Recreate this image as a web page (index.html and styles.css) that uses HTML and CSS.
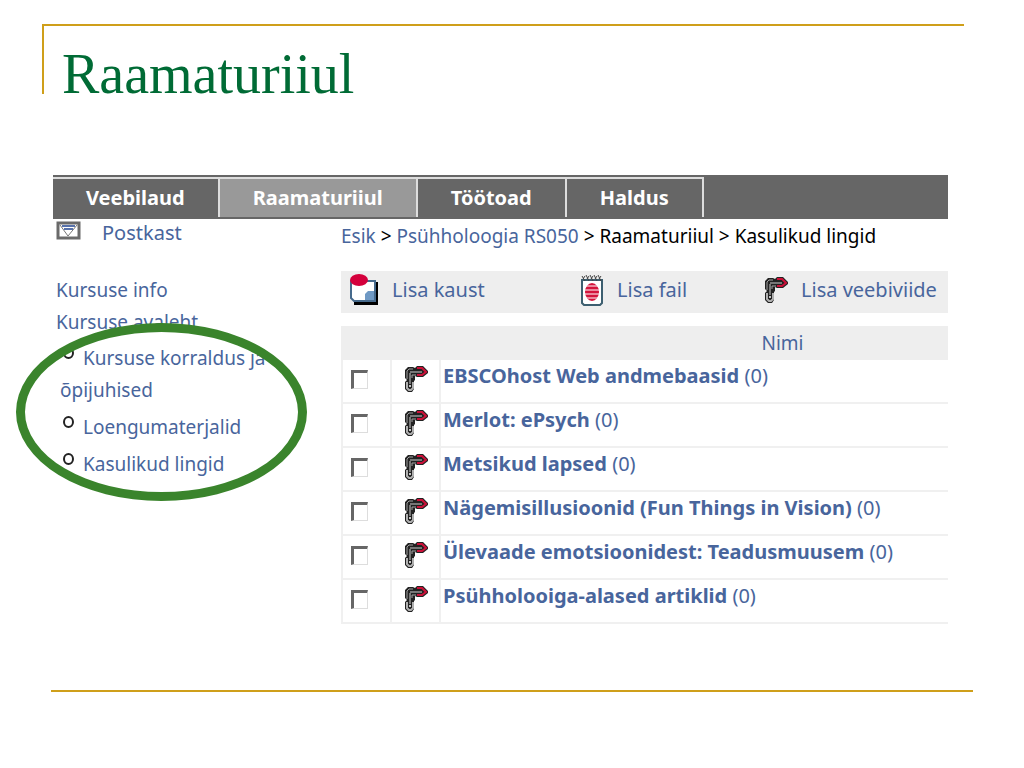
FILE: index.html
```html
<!DOCTYPE html>
<html lang="et">
  <head>
    <meta charset="utf-8">
    <title>Raamaturiiul</title>
    <link rel="stylesheet" href="styles.css">
  </head>

  <body>
    <!-- link icon, used in the toolbar and in every row -->
    <svg class="sprite" aria-hidden="true">
      <symbol id="chain" viewBox="0 0 24 27">
        <path d="M4 1H9L11 2L13 0H19L24 5V7L19 11H13L11 10V14L10 15V23L8 26H4L1 23V16L3 14L1 12V4Z" fill="#222"/>
        <path d="M13 2H18L22 6L18 9H13" fill="none" stroke="#cc1038" stroke-width="2"/>
        <path d="M3 13V5L5 3H9M8 12V9H12" fill="none" stroke="#a0a0a0" stroke-width="1"/>
        <path d="M3 16V22L5 24H7L9 22V16" fill="none" stroke="#b0b0b0" stroke-width="2"/>
        <path d="M6 18V7M6 6H18" fill="none" stroke="#ccc" stroke-width="1"/>
        <circle cx="6" cy="20" r="1" fill="#fff"/>
      </symbol>
    </svg>

    <header class="title">
      <h1>Raamaturiiul</h1>
    </header>

    <div class="portal">
      <nav class="tabs">
        <a href="#">Veebilaud</a>
        <a href="#" class="active">Raamaturiiul</a>
        <a href="#">Töötoad</a>
        <a href="#">Haldus</a>
      </nav>

      <div class="columns">
        <aside class="side">
          <a href="#" class="mailbox">
            <svg width="25" height="19" viewBox="0 0 25 19">
              <rect x="2" y="2" width="21" height="15" fill="#fff" stroke="#6a6a6a" stroke-width="3"/>
              <path d="M4 4L12 15L21 4" fill="none" stroke="#777" stroke-width="1"/>
              <path d="M6 5H19M8 8H17" stroke="#5872ab" stroke-width="2"/>
            </svg>
            Postkast
          </a>
          <a href="#">Kursuse info</a>
          <a href="#">Kursuse avaleht</a>
          <div class="marked">
            <ul>
              <li><a href="#">Kursuse korraldus ja õpijuhised</a></li>
              <li><a href="#">Loengumaterjalid</a></li>
              <li><a href="#">Kasulikud lingid</a></li>
            </ul>
            <div class="ring"></div>
          </div>
        </aside>

        <main class="content">
          <p class="path">
            <a href="#">Esik</a> &gt; <a href="#">Psühholoogia RS050</a> &gt; Raamaturiiul &gt; Kasulikud lingid
          </p>

          <div class="toolbar">
            <a href="#">
              <svg width="29" height="32" viewBox="0 0 29 32">
                <path d="M4 8H28V31H4Z" fill="#000"/>
                <path d="M1 7H25V27H4L1 24Z" fill="#fff" stroke="#466a8c" stroke-width="2"/>
                <path d="M15 26V20L18 17H24V26Z" fill="#6f99c4"/>
                <ellipse cx="9" cy="6" rx="9" ry="6" fill="#d4003c"/>
              </svg>
              Lisa kaust
            </a>
            <a href="#">
              <svg width="24" height="32" viewBox="0 0 24 32">
                <path d="M2 6H22V29L20 31H4L2 29Z" fill="#fff" stroke="#3d5f70" stroke-width="2"/>
                <path d="M2 2L5 7M6 1L9 7M10 1L13 7M14 1L17 7M18 1L21 7M5 2L3 5M9 2L7 5M13 2L11 5M17 2L15 5M21 2L19 5" fill="none" stroke="#444" stroke-width="1"/>
                <ellipse cx="12" cy="18" rx="7" ry="9" fill="#d4143c"/>
                <path d="M4 12H20M4 16H20M4 20H20M4 24H20" stroke="#fff" stroke-width="1"/>
              </svg>
              Lisa fail
            </a>
            <a href="#">
              <svg width="24" height="27"><use href="#chain"/></svg>
              Lisa veebiviide
            </a>
          </div>

          <table class="links">
            <thead>
              <tr>
                <th class="check"></th>
                <th class="icon"></th>
                <th class="name">Nimi</th>
              </tr>
            </thead>
            <tbody>
              <tr>
                <td><input type="checkbox" aria-label="EBSCOhost Web andmebaasid"></td>
                <td><svg width="24" height="27"><use href="#chain"/></svg></td>
                <td><a href="#"><b>EBSCOhost Web andmebaasid</b> (0)</a></td>
              </tr>
              <tr>
                <td><input type="checkbox" aria-label="Merlot: ePsych"></td>
                <td><svg width="24" height="27"><use href="#chain"/></svg></td>
                <td><a href="#"><b>Merlot: ePsych</b> (0)</a></td>
              </tr>
              <tr>
                <td><input type="checkbox" aria-label="Metsikud lapsed"></td>
                <td><svg width="24" height="27"><use href="#chain"/></svg></td>
                <td><a href="#"><b>Metsikud lapsed</b> (0)</a></td>
              </tr>
              <tr>
                <td><input type="checkbox" aria-label="Nägemisillusioonid (Fun Things in Vision)"></td>
                <td><svg width="24" height="27"><use href="#chain"/></svg></td>
                <td><a href="#"><b>Nägemisillusioonid (Fun Things in Vision)</b> (0)</a></td>
              </tr>
              <tr>
                <td><input type="checkbox" aria-label="Ülevaade emotsioonidest: Teadusmuusem"></td>
                <td><svg width="24" height="27"><use href="#chain"/></svg></td>
                <td><a href="#"><b>Ülevaade emotsioonidest: Teadusmuusem</b> (0)</a></td>
              </tr>
              <tr>
                <td><input type="checkbox" aria-label="Psühholooiga-alased artiklid"></td>
                <td><svg width="24" height="27"><use href="#chain"/></svg></td>
                <td><a href="#"><b>Psühholooiga-alased artiklid</b> (0)</a></td>
              </tr>
            </tbody>
          </table>
        </main>
      </div>
    </div>

    <hr class="rule">
  </body>
</html>
```
FILE: styles.css
```css
*{
  box-sizing:border-box;
  margin:0;
  padding:0;
}

body{
  background-color:white;
  color:black;
  font-family:"Noto Sans", sans-serif;
  font-size:20px;
  line-height:32px;
  padding-top:24px;
}

a{
  color:#48659c;
  text-decoration:none;
}

svg{
  display:block;
  flex:none;
}

.sprite{
  position:absolute;
  width:0;
  height:0;
}

/* ---------- slide title ---------- */

.title{
  height:70px;
  margin:0 60px 0 42px;
  padding:16px 0 0 18px;
  border-top:2px solid #cf9f1a;
  border-left:2px solid #cf9f1a;
}

.title h1{
  color:#006b35;
  font-family:"Liberation Serif", serif;
  font-size:56px;
  font-weight:normal;
  line-height:64px;
}

/* ---------- portal ---------- */

.portal{
  margin:81px 76px 0 53px;
}

.tabs{
  display:flex;
  height:44px;
  padding:2px 0;
  background-color:#666;
}

.tabs a{
  padding:0 33px;
  border-top:2px solid #ddd;
  border-right:2px solid #ddd;
  color:white;
  font-weight:bold;
  line-height:38px;
}

.tabs .active{
  background-color:#999;
}

.columns{
  display:grid;
  grid-template-columns:288px 1fr;
}

.side{
  padding-left:3px;
  font-size:19px;
}

.side > a{
  display:block;
}

.side .mailbox{
  display:flex;
  gap:21px;
  height:55px;
  font-size:20px;
  line-height:28px;
}

.mailbox svg{
  margin-top:2px;
}

.marked{
  position:relative;
  padding:4px 40px 0 4px;
}

.marked ul{
  list-style:none;
}

.marked li{
  margin-bottom:5px;
}

.marked li::before{
  content:"";
  display:inline-block;
  width:7px;
  height:8px;
  margin:0 9px 14px 3px;
  border:2px solid #222;
  border-radius:50%;
  vertical-align:middle;
}

/* drawn over the list */
.ring{
  position:absolute;
  top:-15px;
  left:-40px;
  width:291px;
  height:178px;
  border:9px solid #3a842c;
  border-radius:50%;
  pointer-events:none;
}

.path{
  font-size:19px;
  line-height:34px;
  white-space:nowrap;
}

.toolbar{
  display:grid;
  grid-template-columns:230fr 184fr 184fr;
  height:42px;
  margin:18px 0 13px;
  padding-left:9px;
  background-color:#eee;
}

.toolbar a{
  display:flex;
  align-items:center;
  gap:13px;
  height:38px;
  white-space:nowrap;
}

.links{
  width:100%;
  border-collapse:separate;
  border-spacing:0;
  table-layout:fixed;
}

.links th{
  height:34px;
  background-color:#eee;
  color:#48659c;
  font-size:19px;
  font-weight:normal;
}

.links .check{
  width:49px;
}

.links .icon{
  width:49px;
}

.links .name{
  padding-left:178px;
}

.links td{
  height:44px;
  padding:0 0 4px 2px;
  border:solid #f0f0f0;
  border-width:0 0 2px 2px;
  vertical-align:top;
  white-space:nowrap;
}

.links td svg{
  margin:6px 0 0 10px;
}

.links input{
  display:block;
  appearance:none;
  width:17px;
  height:19px;
  margin:10px 0 0 6px;
  border:1px solid #ddd;
  border-top:3px solid #666;
  border-left:3px solid #666;
}

.rule{
  margin:66px 51px 0;
  border:0;
  border-top:2px solid #cf9f1a;
}
```
